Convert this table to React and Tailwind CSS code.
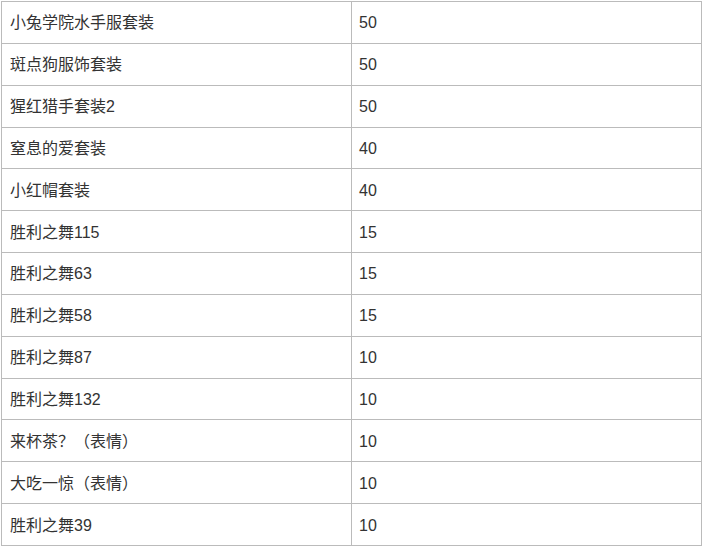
const rows = [
  ["小兔学院水手服套装", "50"],
  ["斑点狗服饰套装", "50"],
  ["猩红猎手套装2", "50"],
  ["窒息的爱套装", "40"],
  ["小红帽套装", "40"],
  ["胜利之舞115", "15"],
  ["胜利之舞63", "15"],
  ["胜利之舞58", "15"],
  ["胜利之舞87", "10"],
  ["胜利之舞132", "10"],
  ["来杯茶？（表情）", "10"],
  ["大吃一惊（表情）", "10"],
  ["胜利之舞39", "10"],
];

export default function App() {
  return (
    <div
      className="min-h-[549px] bg-white pt-px pl-px"
      style={{ fontFamily: "'Liberation Sans', 'Noto Sans CJK SC', sans-serif" }}
    >
      <div className="w-[701px] border-x border-t border-[#bbbbbb] text-[16px] text-[#333333]">
        {rows.map(([name, price]) => (
          <div key={name} className="flex h-[41.85px] border-b border-[#bbbbbb]">
            <div className="flex w-[350px] items-center border-r border-[#bbbbbb] pl-2 pt-[2px]">{name}</div>
            <div className="flex flex-1 items-center pl-[7px] pt-[2px]">{price}</div>
          </div>
        ))}
      </div>
    </div>
  );
}
